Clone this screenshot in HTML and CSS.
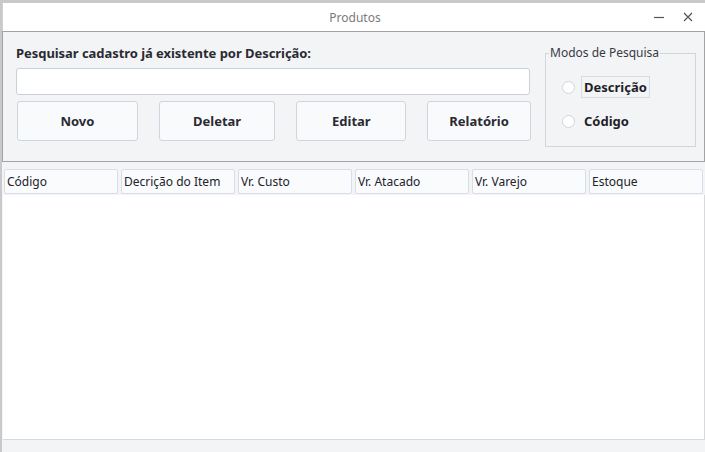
FILE: index.html
```html
<!DOCTYPE html>
<html lang="pt">
<head>
<meta charset="utf-8">
<title>Produtos</title>
<link rel="stylesheet" href="styles.css">
</head>
<body>
<div class="desktop">
  <div class="window">
    <div class="titlebar">
      <span class="title">Produtos</span>
      <div class="controls">
        <span class="ctl min"><svg width="10" height="10" viewBox="0 0 10 10"><path d="M0 5.5H10" stroke="#555" stroke-width="1.2"/></svg></span>
        <span class="ctl close"><svg width="10" height="10" viewBox="0 0 10 10"><path d="M1 1L9 9M9 1L1 9" stroke="#555" stroke-width="1.2"/></svg></span>
      </div>
    </div>
    <div class="panel">
      <div class="search-col">
        <div class="label">Pesquisar cadastro já existente por Descrição:</div>
        <div class="input"></div>
        <div class="buttons">
          <div class="btn b1">Novo</div>
          <div class="btn b2">Deletar</div>
          <div class="btn b3">Editar</div>
          <div class="btn b4">Relatório</div>
        </div>
      </div>
      <fieldset class="group">
        <legend>Modos de Pesquisa</legend>
        <div class="radio"><span class="circle"></span><span class="rlabel focus">Descrição</span></div>
        <div class="radio"><span class="circle"></span><span class="rlabel">Código</span></div>
      </fieldset>
    </div>
    <div class="table">
      <div class="thead">
        <div class="th">Código</div>
        <div class="th">Decrição do Item</div>
        <div class="th">Vr. Custo</div>
        <div class="th">Vr. Atacado</div>
        <div class="th">Vr. Varejo</div>
        <div class="th">Estoque</div>
      </div>
      <div class="tbody"></div>
    </div>
    <div class="footer"></div>
  </div>
</div>
</body>
</html>
```
FILE: styles.css
```css
html, body {
  margin: 0;
  padding: 0;
  width: 705px;
  height: 452px;
  overflow: hidden;
  background: #c9c9cc;
  font-family: "Noto Sans", "Open Sans", sans-serif;
}
.desktop {
  padding: 3px 0 0 2px;
  height: 449px;
}
.window {
  width: 703px;
  height: 449px;
  background: #f3f4f6;
  display: flex;
  flex-direction: column;
}
.titlebar {
  height: 28px;
  background: #ffffff;
  border-left: 1px solid #d0d0d0;
  position: relative;
  display: flex;
  align-items: center;
  justify-content: center;
  flex-shrink: 0;
}
.title {
  font-size: 12px;
  color: #7a7a80;
  margin-left: 2px;
}
.controls {
  position: absolute;
  right: 12px;
  top: 9px;
  display: flex;
  gap: 19px;
}
.ctl {
  width: 10px;
  height: 10px;
  display: block;
}
.ctl svg { display: block; }
.panel {
  height: 129px;
  border: 1px solid #a3a3a6;
  background: #f3f4f6;
  display: flex;
  flex-shrink: 0;
}
.search-col {
  width: 515px;
  padding: 12px 0 0 13px;
}
.label {
  font-size: 13px;
  font-weight: bold;
  color: #2a2a33;
  line-height: 18px;
  height: 18px;
  letter-spacing: -0.05px;
}
.input {
  margin-top: 6px;
  height: 25px;
  width: 512px;
  background: #fff;
  border: 1px solid #c9d0dc;
  border-radius: 3px;
}
.buttons {
  margin-top: 6px;
  display: flex;
  gap: 21px;
  padding-left: 1px;
}
.btn {
  height: 38px;
  border: 1px solid #cfd5de;
  border-radius: 3px;
  background: #f9fafc;
  display: flex;
  align-items: center;
  justify-content: center;
  font-size: 13px;
  font-weight: bold;
  color: #2a2a33;
}
.b1 { width: 119px; }
.b2 { width: 115px; }
.b3 { width: 108px; }
.b4 { width: 102px; }
.group {
  margin: 14px 0 0 14px;
  width: 151px;
  height: 101px;
  box-sizing: border-box;
  border: 1px solid #d2d5db;
  padding: 0;
  position: relative;
}
.group legend {
  font-size: 12px;
  color: #3a3a44;
  padding: 0 1px;
  margin-left: 3px;
  line-height: 14px;
}
.radio {
  display: flex;
  align-items: center;
  height: 22px;
  margin-left: 16px;
}
.radio:first-of-type { margin-top: 16px; }
.radio + .radio { margin-top: 12px; }
.circle {
  width: 13px;
  height: 13px;
  border-radius: 50%;
  border: 1px solid #cfd5de;
  background: #fff;
  box-sizing: border-box;
  margin-right: 5px;
}
.rlabel {
  font-size: 13px;
  font-weight: bold;
  color: #1f1f28;
  padding: 1px 2px;
  border: 1px solid transparent;
  margin-left: 1px;
}
.rlabel.focus {
  border-color: #d7dbe2;
}
.table {
  margin-top: 7px;
  display: flex;
  flex-direction: column;
  flex-shrink: 0;
}
.thead {
  display: grid;
  grid-template-columns: repeat(6, 1fr);
  gap: 3px;
  padding: 0 2px 0 2px;
  height: 25px;
}
.th {
  border: 1px solid #d8dee8;
  border-radius: 2px;
  background: #f9fbfd;
  font-size: 12px;
  color: #22222b;
  display: flex;
  align-items: center;
  padding-left: 2px;
}
.tbody {
  margin-top: 1px;
  margin-left: 1px;
  height: 244px;
  background: #fff;
  border-right: 1px solid #d9d9dc;
  border-bottom: 1px solid #d9d9dc;
}
.footer { flex: 1; }
```
